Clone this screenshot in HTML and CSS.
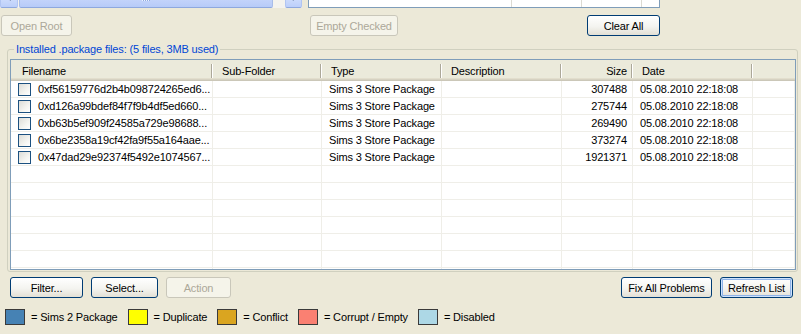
FILE: index.html
```html
<!DOCTYPE html>
<html lang="en">
<head>
<meta charset="UTF-8">
<meta name="viewport" content="width=device-width, initial-scale=1.0">
<title>Installed package files</title>
<link rel="stylesheet" href="styles.css">
</head>
<body>
<div class="top">
  <div class="hscroll">
    <div class="sb-btn">
      <svg width="17" height="17" viewBox="0 0 17 17"><path d="M10 5 L6.5 8.5 L10 12" fill="none" stroke="#4d6185" stroke-width="2"/></svg>
    </div>
    <div class="sb-thumb"><span class="grip"></span></div>
    <div class="sb-track"></div>
    <div class="sb-btn right">
      <svg width="16" height="17" viewBox="0 0 16 17"><path d="M6.5 5 L10 8.5 L6.5 12" fill="none" stroke="#4d6185" stroke-width="2"/></svg>
    </div>
  </div>
  <div class="mini-list">
    <div class="mini-col w1"></div>
    <div class="mini-col w2"></div>
    <div class="mini-col w3"></div>
  </div>
</div>

<div class="toolbar">
  <button class="btn open-root" disabled>Open Root</button>
  <button class="btn empty-checked" disabled>Empty Checked</button>
  <button class="btn clear-all">Clear All</button>
</div>

<fieldset class="group">
  <legend>Installed .package files: (5 files, 3MB used)</legend>
  <div class="list">
    <table>
      <colgroup>
        <col class="c-name">
        <col class="c-sub">
        <col class="c-type">
        <col class="c-desc">
        <col class="c-size">
        <col class="c-date">
        <col>
      </colgroup>
      <thead>
        <tr>
          <th class="h-name">Filename</th>
          <th>Sub-Folder</th>
          <th>Type</th>
          <th>Description</th>
          <th class="num">Size</th>
          <th>Date</th>
          <th class="last"></th>
        </tr>
      </thead>
      <tbody>
        <tr>
          <td class="name"><span class="check"></span>0xf56159776d2b4b098724265ed6...</td>
          <td></td><td>Sims 3 Store Package</td><td></td>
          <td class="num">307488</td><td>05.08.2010 22:18:08</td><td></td>
        </tr>
        <tr>
          <td class="name"><span class="check"></span>0xd126a99bdef84f7f9b4df5ed660...</td>
          <td></td><td>Sims 3 Store Package</td><td></td>
          <td class="num">275744</td><td>05.08.2010 22:18:08</td><td></td>
        </tr>
        <tr>
          <td class="name"><span class="check"></span>0xb63b5ef909f24585a729e98688...</td>
          <td></td><td>Sims 3 Store Package</td><td></td>
          <td class="num">269490</td><td>05.08.2010 22:18:08</td><td></td>
        </tr>
        <tr>
          <td class="name"><span class="check"></span>0x6be2358a19cf42fa9f55a164aae...</td>
          <td></td><td>Sims 3 Store Package</td><td></td>
          <td class="num">373274</td><td>05.08.2010 22:18:08</td><td></td>
        </tr>
        <tr>
          <td class="name"><span class="check"></span>0x47dad29e92374f5492e1074567...</td>
          <td></td><td>Sims 3 Store Package</td><td></td>
          <td class="num">1921371</td><td>05.08.2010 22:18:08</td><td></td>
        </tr>
        <tr><td></td><td></td><td></td><td></td><td></td><td></td><td></td></tr>
        <tr><td></td><td></td><td></td><td></td><td></td><td></td><td></td></tr>
        <tr><td></td><td></td><td></td><td></td><td></td><td></td><td></td></tr>
        <tr><td></td><td></td><td></td><td></td><td></td><td></td><td></td></tr>
        <tr><td></td><td></td><td></td><td></td><td></td><td></td><td></td></tr>
        <tr><td></td><td></td><td></td><td></td><td></td><td></td><td></td></tr>
        <tr><td></td><td></td><td></td><td></td><td></td><td></td><td></td></tr>
      </tbody>
    </table>
  </div>
</fieldset>

<div class="actions">
  <button class="btn filter">Filter...</button>
  <button class="btn select">Select...</button>
  <button class="btn action" disabled>Action</button>
  <span class="spacer"></span>
  <button class="btn fix">Fix All Problems</button>
  <button class="btn refresh default">Refresh List</button>
</div>

<div class="key">
  <span class="swatch sims2"></span><span class="key-label">= Sims 2 Package</span>
  <span class="swatch duplicate"></span><span class="key-label">= Duplicate</span>
  <span class="swatch conflict"></span><span class="key-label">= Conflict</span>
  <span class="swatch corrupt"></span><span class="key-label">= Corrupt / Empty</span>
  <span class="swatch disabled"></span><span class="key-label">= Disabled</span>
</div>
</body>
</html>
```

FILE: styles.css
```css
/* Basic page */
body {
  margin: 0;
  width: 801px;
  height: 334px;
  overflow: hidden;
  background: #ece9d8;
  font: 11px "Liberation Sans", Arial, sans-serif;
  letter-spacing: -0.15px;
  color: #000;
}

/* Remains of the panel above (cut off at the top) */
.top {
  height: 8px;
  display: flex;
  align-items: flex-end;
  overflow: hidden;
}
.hscroll {
  display: flex;
  flex: none;
  width: 302px;
  height: 17px;
  background: #f4f3ee;
}
.sb-btn {
  flex: none;
  width: 18px;
  height: 17px;
  box-sizing: border-box;
  border: 1px solid #b1c5f2;
  border-bottom-color: #8ea8de;
  border-radius: 2px;
  background: linear-gradient(#dbe6fd, #bccffa);
}
.sb-btn.right {
  width: 17px;
}
.sb-btn svg {
  display: block;
  margin: -4px 0 0 0;
}
.sb-thumb {
  flex: none;
  width: 254px;
  margin-left: 1px;
  height: 17px;
  box-sizing: border-box;
  border: 1px solid #a8bde9;
  border-bottom-color: #8ea8de;
  border-radius: 2px;
  background: linear-gradient(#d0dcfc, #b7cbf8);
  display: flex;
  justify-content: center;
  align-items: center;
}
.grip {
  width: 8px;
  height: 8px;
  margin-top: -5px;
  background: repeating-linear-gradient(90deg, #eef3ff 0 1px, #8faae0 1px 2px);
}
.sb-track {
  flex: none;
  width: 12px;
}
.mini-list {
  display: flex;
  flex: none;
  width: 352px;
  height: 30px;
  margin-left: 6px;
  box-sizing: border-box;
  border: 1px solid #7f9db9;
  background: #fff;
}
.mini-col {
  border-right: 1px solid #dcdbd3;
}
.mini-col.w1 { width: 202px; }
.mini-col.w2 { width: 69px; }
.mini-col.w3 { width: 59px; }

/* Buttons, XP look */
.btn {
  height: 21px;
  padding: 0;
  box-sizing: border-box;
  font: inherit;
  letter-spacing: inherit;
  color: #000;
  border: 1px solid #003c74;
  border-radius: 3px;
  background: linear-gradient(#ffffff, #f4f4f0 55%, #e3e0d5);
}
.btn:disabled {
  color: #aca899;
  border-color: #c9c7ba;
  background: #f5f4ea;
}
.btn.default {
  box-shadow: inset 0 0 0 1px #cee2fb, inset 0 0 0 2px #8fb3e8;
}

.toolbar {
  display: flex;
  margin-top: 7px;
}
.open-root { width: 71px; margin-left: 1px; }
.empty-checked { width: 88px; margin-left: 238px; }
.clear-all { width: 73px; margin-left: 189px; }

/* Group box with the file list */
.group {
  width: 791px;
  box-sizing: border-box;
  margin: 7px 0 0 7px;
  padding: 3px 1px 1px 2px;
  border: 1px solid #d0d0bf;
  border-radius: 3px;
}
.group legend {
  margin-left: 4px;
  padding: 0 2px;
  line-height: 13px;
  color: #0046d5;
}
.list {
  height: 211px;
  box-sizing: border-box;
  border: 1px solid #7f9db9;
  background: #fff;
  overflow: hidden;
}
.list table {
  width: 784px;
  table-layout: fixed;
  border-collapse: separate;
  border-spacing: 0;
}
.c-name { width: 202px; }
.c-sub { width: 109px; }
.c-type { width: 120px; }
.c-desc { width: 120px; }
.c-size { width: 71px; }
.c-date { width: 120px; }

.list th {
  height: 21px;
  padding: 0 0 0 9px;
  font-weight: normal;
  text-align: left;
  white-space: nowrap;
  background:
    linear-gradient(#aca899, #aca899) no-repeat calc(100% - 1px) 4px / 1px 14px,
    linear-gradient(#fff, #fff) no-repeat 100% 4px / 1px 14px,
    #ebeadb;
  box-shadow: inset 0 -1px #cbc7b8, inset 0 -2px #d6d2c2, inset 0 -3px #e2decd;
}
.list th.h-name { padding-left: 11px; }
.list th.num { text-align: right; padding-right: 6px; }
.list th.last { background: #ebeadb; }

.list td {
  height: 16px;
  padding: 0 0 0 7px;
  line-height: 16px;
  white-space: nowrap;
  overflow: hidden;
  border-right: 1px solid #efeee8;
  border-bottom: 1px solid #efeee8;
}
.list td.num {
  text-align: right;
  padding: 0 5px 0 0;
}
.check {
  display: inline-block;
  width: 13px;
  height: 13px;
  box-sizing: border-box;
  margin: 0 7px 0 0;
  vertical-align: -3px;
  border: 1px solid #1c5180;
  background: linear-gradient(135deg, #dcdcd7, #f4f4f0 60%, #fff);
}

/* Buttons under the list */
.actions {
  display: flex;
  margin-top: 5px;
  padding: 0 8px 0 10px;
}
.filter { width: 73px; }
.select { width: 67px; margin-left: 8px; }
.action { width: 65px; margin-left: 8px; }
.spacer { flex: 1; }
.fix { width: 91px; }
.refresh { width: 73px; margin-left: 8px; }

/* Colour key */
.key {
  display: flex;
  align-items: center;
  height: 16px;
  margin-top: 11px;
  padding-left: 5px;
}
.swatch {
  width: 20px;
  height: 16px;
  box-sizing: border-box;
  border: 1px solid #3a3a3a;
}
.key-label {
  margin: 0 10px 0 6px;
}
.sims2 { background: #4682b4; }
.duplicate { background: #ffff00; }
.conflict { background: #daa520; }
.corrupt { background: #fa8072; }
.disabled { background: #add8e6; }
```
